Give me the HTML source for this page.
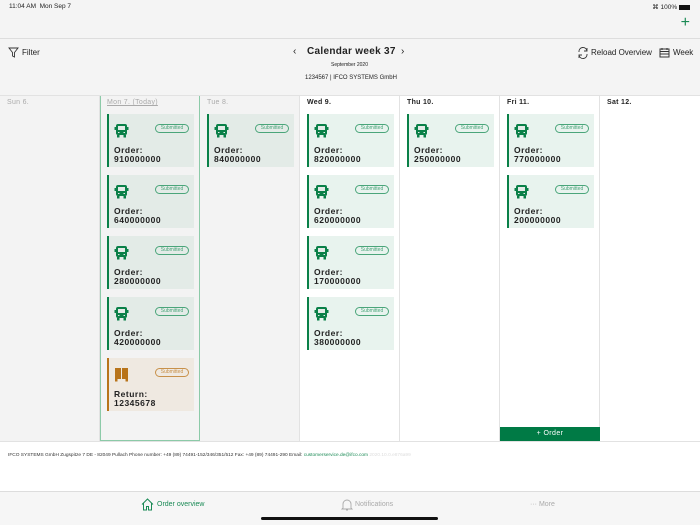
<!DOCTYPE html>
<html><head><style>
*{margin:0;padding:0;box-sizing:border-box}
body{width:700px;height:525px;overflow:hidden;font-family:"Liberation Sans",sans-serif;background:#fff;position:relative;color:#222}
.abs{position:absolute}
.top{left:0;top:0;width:700px;height:95px;background:#f4f4f4}
.col{position:absolute;top:95px;height:346px;width:100px;border-right:1px solid #e2e2e2}
.dh{position:absolute;left:7px;top:4px;font-size:7px;font-weight:bold;color:#222;letter-spacing:.3px}
.card{position:absolute;left:7px;width:87px;height:53px;background:#e3ebe7;border-left:2px solid #0a8048}
.card.f{background:#e8f3ee}
.card.r{background:#efe9e1;border-left-color:#b8741a}
.badge{position:absolute;right:5px;top:10px;width:34px;height:9px;border:1px solid #4aa57a;border-radius:5px;font-size:5px;color:#4aa57a;text-align:center;line-height:7px}
.r .badge{border-color:#c8914a;color:#c8914a}
.txt{position:absolute;left:5px;top:32px;font-size:8.5px;font-weight:bold;line-height:9px;letter-spacing:.5px;color:#222}
.ic{position:absolute;left:5px;top:9px}
</style></head><body>
<div class="abs top"></div>
<div class="abs" style="left:9px;top:3px;font-size:6.5px">11:04 AM&nbsp;&nbsp;Mon Sep 7</div>
<div class="abs" style="right:10px;top:3px;font-size:6.5px">&#8984; 100% <span style="display:inline-block;width:11px;height:5px;background:#111;vertical-align:middle"></span></div>
<div class="abs" style="right:10px;top:14px;font-size:16px;color:#1a8a55">+</div>
<div class="abs" style="left:0;top:38px;width:700px;height:1px;background:#ddd"></div>
<svg class="abs" style="left:8px;top:47px" width="11" height="11" viewBox="0 0 11 11"><path d="M1 1h9L6.5 5.5V10L4.5 9V5.5Z" fill="none" stroke="#333" stroke-width=".9"/></svg>
<div class="abs" style="left:22px;top:48px;font-size:8px">Filter</div>
<div class="abs" style="left:293px;top:46px;font-size:10px">&#8249;</div>
<div class="abs" style="left:307px;top:46px;width:86px;font-size:10px;font-weight:bold;white-space:nowrap;letter-spacing:.3px">Calendar week 37</div>
<div class="abs" style="left:401px;top:46px;font-size:10px">&#8250;</div>
<div class="abs" style="left:331px;top:62px;font-size:5px">September 2020</div>
<div class="abs" style="left:305px;top:75px;font-size:6px">1234567 | IFCO SYSTEMS GmbH</div>
<svg class="abs" style="left:577px;top:47px" width="12" height="12" viewBox="0 0 12 12"><path d="M2 5A4 4 0 0 1 10 4M10 7A4 4 0 0 1 2 8M10 1v3H7M2 11V8h3" fill="none" stroke="#333" stroke-width=".9"/></svg>
<div class="abs" style="left:591px;top:48px;font-size:8px">Reload Overview</div>
<svg class="abs" style="left:659px;top:47px" width="11" height="11" viewBox="0 0 11 11"><rect x="1" y="2" width="9" height="8" fill="none" stroke="#333"/><path d="M1 4.5h9M1 7h9M3 1v2M8 1v2" stroke="#333"/></svg>
<div class="abs" style="left:673px;top:48px;font-size:8px">Week</div>

<div class="col" style="left:0;background:#f3f3f3"><div class="dh" style="color:#aaa;font-weight:normal">Sun 6.</div></div>
<div class="col" style="left:100px;background:#f3f3f3;border:1px solid #8ccaa8"><div class="dh" style="color:#aaa;font-weight:normal;text-decoration:underline;left:6px;top:3px">Mon 7. (Today)</div></div>
<div class="col" style="left:200px;background:#f3f3f3"><div class="dh" style="color:#aaa;font-weight:normal">Tue 8.</div></div>
<div class="col" style="left:300px"><div class="dh">Wed 9.</div></div>
<div class="col" style="left:400px"><div class="dh">Thu 10.</div></div>
<div class="col" style="left:500px"><div class="dh">Fri 11.</div></div>
<div class="col" style="left:600px;border-right:none"><div class="dh">Sat 12.</div></div>
<div class="abs" style="left:0;top:95px;width:700px;height:1px;background:#e2e2e2"></div>
<div class="abs" style="left:500px;top:427px;width:100px;height:14px;background:#007a45;color:#fff;font-size:7px;text-align:center;line-height:14px;letter-spacing:.4px">+ Order</div>
<div class="abs" style="left:0;top:441px;width:700px;height:1px;background:#e2e2e2"></div>

<div id="cards"></div>
<script>
var truck='<svg class="ic" width="15" height="15" viewBox="0 0 15 15"><rect x="2" y="1" width="11" height="11" rx="2" fill="#0a8048"/><rect x="4" y="3" width="7" height="4" fill="#e3ebe7"/><rect x="0.5" y="4" width="1.5" height="3" fill="#0a8048"/><rect x="13" y="4" width="1.5" height="3" fill="#0a8048"/><rect x="3" y="12" width="2.5" height="2.5" fill="#0a8048"/><rect x="9.5" y="12" width="2.5" height="2.5" fill="#0a8048"/><rect x="4" y="9" width="1.5" height="1" fill="#e3ebe7"/><rect x="9.5" y="9" width="1.5" height="1" fill="#e3ebe7"/></svg>';
var box='<svg class="ic" width="15" height="15" viewBox="0 0 15 15"><rect x="1" y="1" width="13" height="11" fill="#b8741a"/><path d="M7.5 1v11" stroke="#efe9e1"/><rect x="1" y="12" width="2.5" height="2.5" fill="#b8741a"/><rect x="11.5" y="12" width="2.5" height="2.5" fill="#b8741a"/></svg>';
var d=[[100,['910000000','640000000','280000000','420000000'],0],[200,['840000000'],0],[300,['820000000','620000000','170000000','380000000'],1],[400,['250000000'],1],[500,['770000000','200000000'],1]];
var h='';
d.forEach(function(c){c[1].forEach(function(n,i){h+='<div class="card'+(c[2]?' f':'')+'" style="left:'+(c[0]+7)+'px;top:'+(114+i*61)+'px">'+truck+'<div class="badge">Submitted</div><div class="txt">Order:<br>'+n+'</div></div>';});});
h+='<div class="card r" style="left:107px;top:358px">'+box+'<div class="badge">Submitted</div><div class="txt">Return:<br>12345678</div></div>';
document.getElementById('cards').innerHTML=h;
</script>

<div class="abs" style="left:8px;top:453px;font-size:4.8px;color:#333;white-space:nowrap">IFCO SYSTEMS GmbH Zugspitze 7 DE - 82049 Pullach Phone number: +49 (89) 74491-152/346/351/512 Fax: +49 (89) 74491-290 Email: <span style="color:#1a8a55">customerservice.de@ifco.com</span> <span style="color:#ddd">2020.10.0.e876a99</span></div>
<div class="abs" style="left:0;top:491px;width:700px;height:34px;background:#f6f6f6;border-top:1px solid #ddd"></div>
<svg class="abs" style="left:141px;top:498px" width="13" height="13" viewBox="0 0 13 13"><path d="M1 6.5L6.5 1 12 6.5M2.5 5v7h3V8.5h2V12h3V5" fill="none" stroke="#1a8a55" stroke-width="1"/></svg>
<div class="abs" style="left:157px;top:501px;font-size:7px;color:#1a8a55">Order overview</div>
<svg class="abs" style="left:341px;top:498px" width="12" height="13" viewBox="0 0 12 13"><path d="M2 10V6a4 4 0 0 1 8 0v4l1 1H1Z M5 12h2" fill="none" stroke="#aaa" stroke-width=".9"/></svg>
<div class="abs" style="left:355px;top:501px;font-size:7px;color:#aaa">Notifications</div>
<div class="abs" style="left:530px;top:501px;font-size:7px;color:#aaa">··· More</div>
<div class="abs" style="left:261px;top:517px;width:177px;height:3px;border-radius:2px;background:#111"></div>
</body></html>
